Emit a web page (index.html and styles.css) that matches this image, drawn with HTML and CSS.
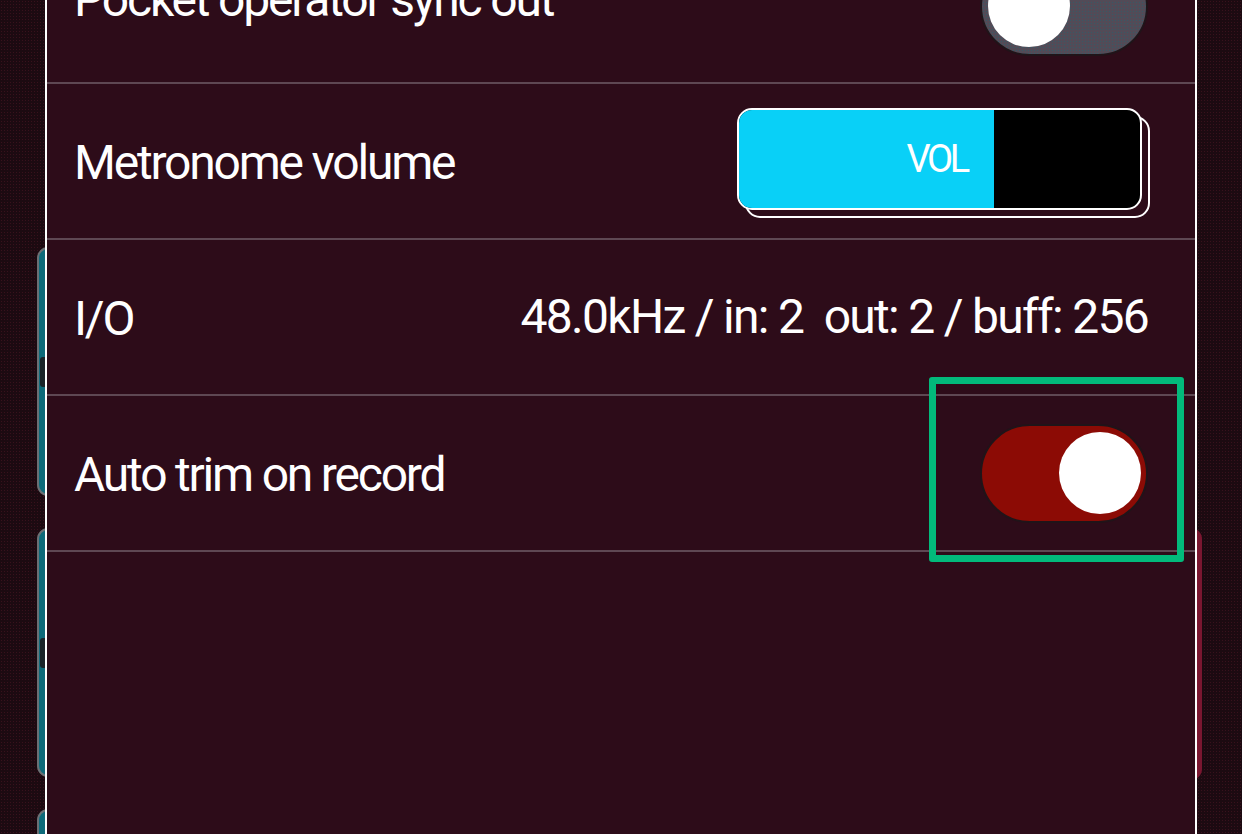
FILE: index.html
```html
<!DOCTYPE html>
<html lang="en">
<head>
<meta charset="utf-8">
<title>Settings</title>
<link rel="stylesheet" href="styles.css">
</head>
<body>
<div class="screen">
  <div class="backdrop">
    <div class="col-left">
      <div class="card teal"><span class="mark"></span></div>
      <div class="card teal"><span class="mark"></span></div>
      <div class="card teal"></div>
    </div>
    <div class="col-right">
      <div class="card crimson"></div>
    </div>
  </div>

  <div class="panel">
    <div class="rows">
      <div class="row row-first">
        <span class="label">Pocket operator sync out</span>
        <div class="toggle off"><span class="knob"></span></div>
      </div>
      <div class="row">
        <span class="label">Metronome volume</span>
        <div class="slider">
          <div class="track">
            <div class="fill" style="width:63.5%"><span class="fill-text">VOL</span></div>
          </div>
        </div>
      </div>
      <div class="row">
        <span class="label">I/O</span>
        <span class="value">48.0kHz / in: 2  out: 2 / buff: 256</span>
      </div>
      <div class="row">
        <span class="label">Auto trim on record</span>
        <div class="toggle on"><span class="knob"></span></div>
      </div>
    </div>
  </div>

  <div class="highlight"></div>
</div>
</body>
</html>
```

FILE: styles.css
```css
html, body {
  margin: 0;
  padding: 0;
}

body {
  background: #1c0a11;
  font-family: Roboto, "Noto Sans", sans-serif;
  overflow: hidden;
}

.screen {
  position: relative;
  width: 1242px;
  height: 834px;
  overflow: hidden;
  background-color: #1c0a11;
  background-image: radial-gradient(rgba(110, 30, 50, 0.35) 0.6px, transparent 1px);
  background-size: 3px 3px;
}

/* cards behind the modal panel */
.backdrop {
  display: flex;
  justify-content: space-between;
  height: 100%;
}

.col-left {
  display: flex;
  flex-direction: column;
  gap: 32px;
  width: 200px;
  margin-left: 37px;
  padding-top: 247px;
}

.col-right {
  width: 200px;
  margin-right: 40px;
  padding-top: 528px;
}

.card {
  box-sizing: border-box;
  border-radius: 11px;
  flex: none;
}

.card.teal {
  height: 249px;
  background: #0d6a7a;
  border: 2px solid #6b7074;
  display: flex;
  align-items: center;
}

.mark {
  width: 10px;
  height: 30px;
  margin-left: 1px;
  background: #1a2328;
  border-radius: 3px;
}

.card.crimson {
  height: 252px;
  background: #7a1630;
}

/* modal panel */
.panel {
  position: absolute;
  top: 0;
  left: 45px;
  width: 1152px;
  height: 834px;
  box-sizing: border-box;
  border-left: 2px solid #ffffff;
  border-right: 2px solid #ffffff;
  background: #2d0c19;
  overflow: hidden;
}

.rows {
  margin-top: -72px;
}

.row {
  box-sizing: border-box;
  height: 156px;
  border-bottom: 2px solid #5e4853;
  display: flex;
  align-items: center;
  justify-content: space-between;
  padding: 0 47px 0 27px;
}

.label,
.value {
  color: #ffffff;
  font-size: 48px;
  font-weight: 400;
  line-height: 1;
  white-space: pre;
}

.label {
  letter-spacing: -2.2px;
  padding-top: 3px;
}

.value {
  letter-spacing: -1.7px;
}

.row-first .label {
  padding-top: 0;
  padding-bottom: 10px;
}

/* toggles */
.toggle {
  box-sizing: border-box;
  width: 168px;
  height: 99px;
  border-radius: 50px;
  border: 2px solid #201419;
  display: flex;
  align-items: center;
}

.toggle.on {
  background: #8c0b05;
  justify-content: flex-end;
  padding-right: 5px;
}

.toggle.off {
  background-color: #524b57;
  background-image: radial-gradient(rgba(20, 110, 120, 0.45) 0.6px, transparent 1px);
  background-size: 3px 3px;
  justify-content: flex-start;
  padding-left: 6px;
  margin-top: 2px;
}

.knob {
  width: 82px;
  height: 82px;
  border-radius: 50%;
  background: #ffffff;
}

/* volume slider */
.slider {
  position: relative;
  width: 405px;
  height: 102px;
  margin-right: 6px;
  margin-bottom: 4px;
}

.slider::before {
  content: "";
  position: absolute;
  left: 8px;
  top: 8px;
  right: -8px;
  bottom: -8px;
  border: 2px solid #ffffff;
  border-radius: 15px;
}

.track {
  position: relative;
  box-sizing: border-box;
  height: 100%;
  border: 2px solid #ffffff;
  border-radius: 15px;
  background: #000000;
  overflow: hidden;
  display: flex;
}

.fill {
  height: 100%;
  background: #09d0f7;
  display: flex;
  align-items: center;
  justify-content: flex-end;
}

.fill-text {
  color: #ffffff;
  font-size: 38px;
  font-weight: 400;
  letter-spacing: -3.5px;
  padding-right: 27px;
  line-height: 1;
}

/* green focus rectangle overlay */
.highlight {
  position: absolute;
  left: 929px;
  top: 377px;
  width: 255px;
  height: 185px;
  box-sizing: border-box;
  border: 7px solid #02ba7b;
  border-radius: 3px;
}
```
